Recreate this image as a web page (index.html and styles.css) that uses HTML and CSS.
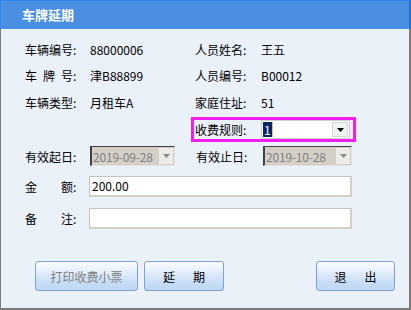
FILE: index.html
```html
<!DOCTYPE html>
<html lang="zh-CN">
<head>
  <meta charset="UTF-8" />
  <title>车牌延期</title>
  <link rel="stylesheet" href="styles.css">
</head>
<body>
  <div class="window">
    <div class="titlebar">车牌延期</div>
    <div class="body">

      <div class="row info r1">
        <div class="label"><span class="lbl">车辆编号</span>:</div>
        <div class="val">88000006</div>
        <div class="label"><span class="lbl">人员姓名</span>:</div>
        <div class="val">王五</div>
      </div>

      <div class="row info r2">
        <div class="label"><span class="lbl">车牌号</span>:</div>
        <div class="val">津B88899</div>
        <div class="label"><span class="lbl">人员编号</span>:</div>
        <div class="val">B00012</div>
      </div>

      <div class="row info r3">
        <div class="label"><span class="lbl">车辆类型</span>:</div>
        <div class="val">月租车A</div>
        <div class="label"><span class="lbl">家庭住址</span>:</div>
        <div class="val">51</div>
      </div>

      <div class="row rule-row">
        <div class="focus-box">
          <div class="label"><span class="lbl">收费规则</span>:</div>
          <div class="combo">
            <span class="sel">1</span><span class="caret"></span>
            <span class="drop">
              <svg width="7" height="4" viewBox="0 0 7 4"><polygon points="0,0 7,0 3.5,4" fill="#000"/></svg>
            </span>
          </div>
        </div>
      </div>

      <div class="row date-row">
        <div class="label"><span class="lbl">有效起日</span>:</div>
        <div class="date date-start">
          <span class="date-text">2019-09-28</span>
          <span class="drop">
            <svg width="7" height="4" viewBox="0 0 7 4"><polygon points="0,0 7,0 3.5,4" fill="#8a8a8a"/></svg>
          </span>
        </div>
        <div class="label label-end"><span class="lbl">有效止日</span>:</div>
        <div class="date date-end">
          <span class="date-text">2019-10-28</span>
          <span class="drop">
            <svg width="7" height="4" viewBox="0 0 7 4"><polygon points="0,0 7,0 3.5,4" fill="#8a8a8a"/></svg>
          </span>
        </div>
      </div>

      <div class="row text-row amount-row">
        <div class="label"><span class="lbl">金额</span>:</div>
        <div class="textbox">200.00</div>
      </div>

      <div class="row text-row note-row">
        <div class="label"><span class="lbl">备注</span>:</div>
        <div class="textbox"></div>
      </div>

      <div class="buttons">
        <button class="btn btn-print" disabled>打印收费小票</button>
        <button class="btn btn-extend">延　期</button>
        <button class="btn btn-exit">退　出</button>
      </div>

    </div>
  </div>
</body>
</html>
```

FILE: styles.css
```css
:root {
  --title: #4a8fe1; --bg: #ebf1f9; --frame: #7a7a7a;
  --text: #000; --disabled: #808080; --magenta: #f01ef0;
}
* { box-sizing: border-box; }
body { margin: 0; font-family: "Noto Sans CJK SC", "Noto Sans", sans-serif; font-size: 12px; color: var(--text); }
.window { width: 411px; height: 310px; display: flex; flex-direction: column; background: var(--bg); }
.titlebar { height: 29px; background: var(--title); border-top: 1px solid #2f86f5; border-left: 1px solid #2f86f5; border-right: 2px solid #2a6fc8;
  color: #fff; font-weight: 700; font-size: 13px; line-height: 27px; padding-left: 21px; }
.body { flex: 1; border-left: 1px solid var(--frame); border-right: 2px solid var(--frame); border-bottom: 2px solid var(--frame);
  padding: 7px 0 0 24px; display: flex; flex-direction: column; }

.row { display: flex; align-items: center; }
.label { white-space: nowrap; }
.lbl { display: inline-block; width: 48px; text-align: justify; text-align-last: justify; }

/* info grid rows */
.info { display: grid; grid-template-columns: 65px 105px 66px 1fr; align-items: center; }
.r1 { height: 26px; }
.r2, .r3 { height: 27px; }
.val { white-space: nowrap; }

/* highlighted combo row */
.rule-row { margin-top: 1px; padding-left: 166px; }
.focus-box { display: flex; align-items: center; width: 165px; height: 25px; border: 3px solid var(--magenta); padding: 0 3px 0 1px; }
.focus-box .label { width: 66px; }
.combo { position: relative; width: 89px; height: 19px; background: #fff; border: 1px solid #cfcfcf; display: flex; align-items: center; padding-left: 1px; }
.sel { background: #0a246a; color: #fff; height: 15px; line-height: 15px; padding: 0 1px; }
.caret { width: 1px; height: 15px; background: #e8c070; }
.combo .drop { margin-left: auto; margin-right: 1px; width: 16px; height: 15px; background: #f1f2f4; border: 1px solid #d6d6d6;
  display: flex; align-items: center; justify-content: center; }

/* disabled date pickers */
.date-row { margin-top: 4px; height: 20px; }
.date-row .label { width: 65px; }
.date { height: 20px; background: #d4d0c8; border: 1px solid #e2e2e2; border-left: 2px solid #404040; border-top: 1px solid #404040;
  display: flex; align-items: center; color: var(--disabled); font-size: 12px; padding-left: 1px; overflow: hidden; }
.date-text { white-space: nowrap; letter-spacing: -0.2px; }
.date-start { width: 85px; }
.date-end { width: 89px; }
.label-end { margin-left: 21px; width: 67px !important; }
.date .drop { margin-left: auto; margin-right: 1px; flex: none; width: 14px; height: 16px; background: #ecebe8;
  display: flex; align-items: center; justify-content: center; }

/* text inputs */
.text-row .label { width: 64px; }
.textbox { width: 263px; height: 21px; background: #fff; border: 1px solid #c4c4c4; border-right: 2px solid #d4d0c8; border-bottom: 2px solid #d4d0c8;
  padding-left: 2px; line-height: 18px; }
.amount-row { margin-top: 10px; }
.note-row { margin-top: 11px; }

/* buttons */
.buttons { display: flex; margin-top: 32px; padding-left: 10px; padding-right: 14px; }
.btn { height: 30px; border: 1px solid #7ea2cf; border-radius: 3px; font-family: inherit; font-size: 12px; color: #000;
  background: linear-gradient(to bottom, #fbfdff 0%, #e3eefb 35%, #c9def6 70%, #bfd7f3 100%); padding: 0; }
.btn-print { width: 103px; color: var(--disabled); }
.btn-extend { width: 80px; margin-left: 6px; letter-spacing: 3px; text-indent: 3px; }
.btn-exit { width: 79px; margin-left: auto; letter-spacing: 3px; text-indent: 3px; }
```
